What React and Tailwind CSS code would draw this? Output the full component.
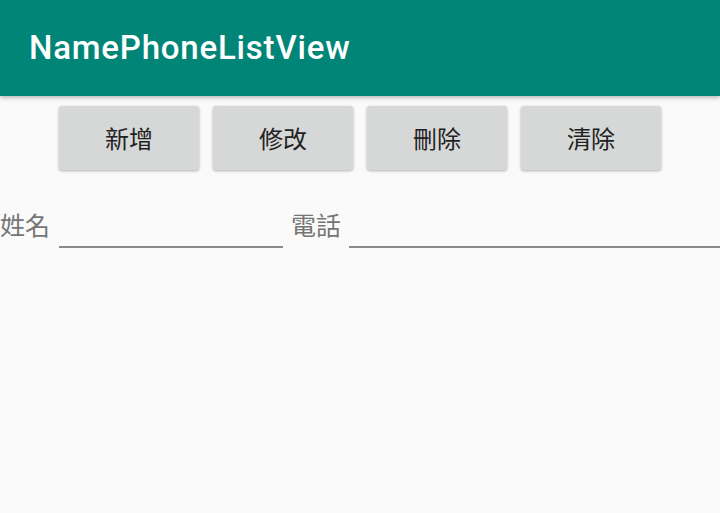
export default function App() {
  const buttons = ['新增', '修改', '刪除', '清除'];

  return (
    <div className="w-[720px] h-[513px] bg-[#fafafa] overflow-hidden" style={{ fontFamily: 'Roboto, "Noto Sans CJK TC", sans-serif' }}>
      <div className="h-[96px] bg-[#008577] flex items-center pl-[29px] shadow-[0_2px_4px_rgba(0,0,0,0.25)]">
        <h1 className="text-white text-[33px] font-medium tracking-[0.8px]">NamePhoneListView</h1>
      </div>

      <div className="flex justify-center gap-[14px] pt-[10px]">
        {buttons.map((b) => (
          <button
            key={b}
            type="button"
            className="w-[140px] h-[64px] bg-[#d6d7d7] rounded-[3px] shadow-[0_1px_3px_rgba(0,0,0,0.3)] text-[24px] text-[#222]"
            style={{ fontFamily: '"Noto Sans CJK TC", sans-serif' }}
          >
            {b}
          </button>
        ))}
      </div>

      <div className="flex items-start mt-[26px]" style={{ fontFamily: '"Noto Sans CJK TC", sans-serif' }}>
        <div className="h-[58px] flex items-center text-[25px] text-[#757575] w-[50px]">姓名</div>
        <div className="ml-[9px] w-[224px] h-[52px] border-b-2 border-[#8a8a8a]"></div>
        <div className="ml-[8px] h-[58px] flex items-center text-[25px] text-[#757575] w-[50px]">電話</div>
        <div className="ml-[8px] flex-1 h-[52px] border-b-2 border-[#8a8a8a]"></div>
      </div>
    </div>
  );
}
